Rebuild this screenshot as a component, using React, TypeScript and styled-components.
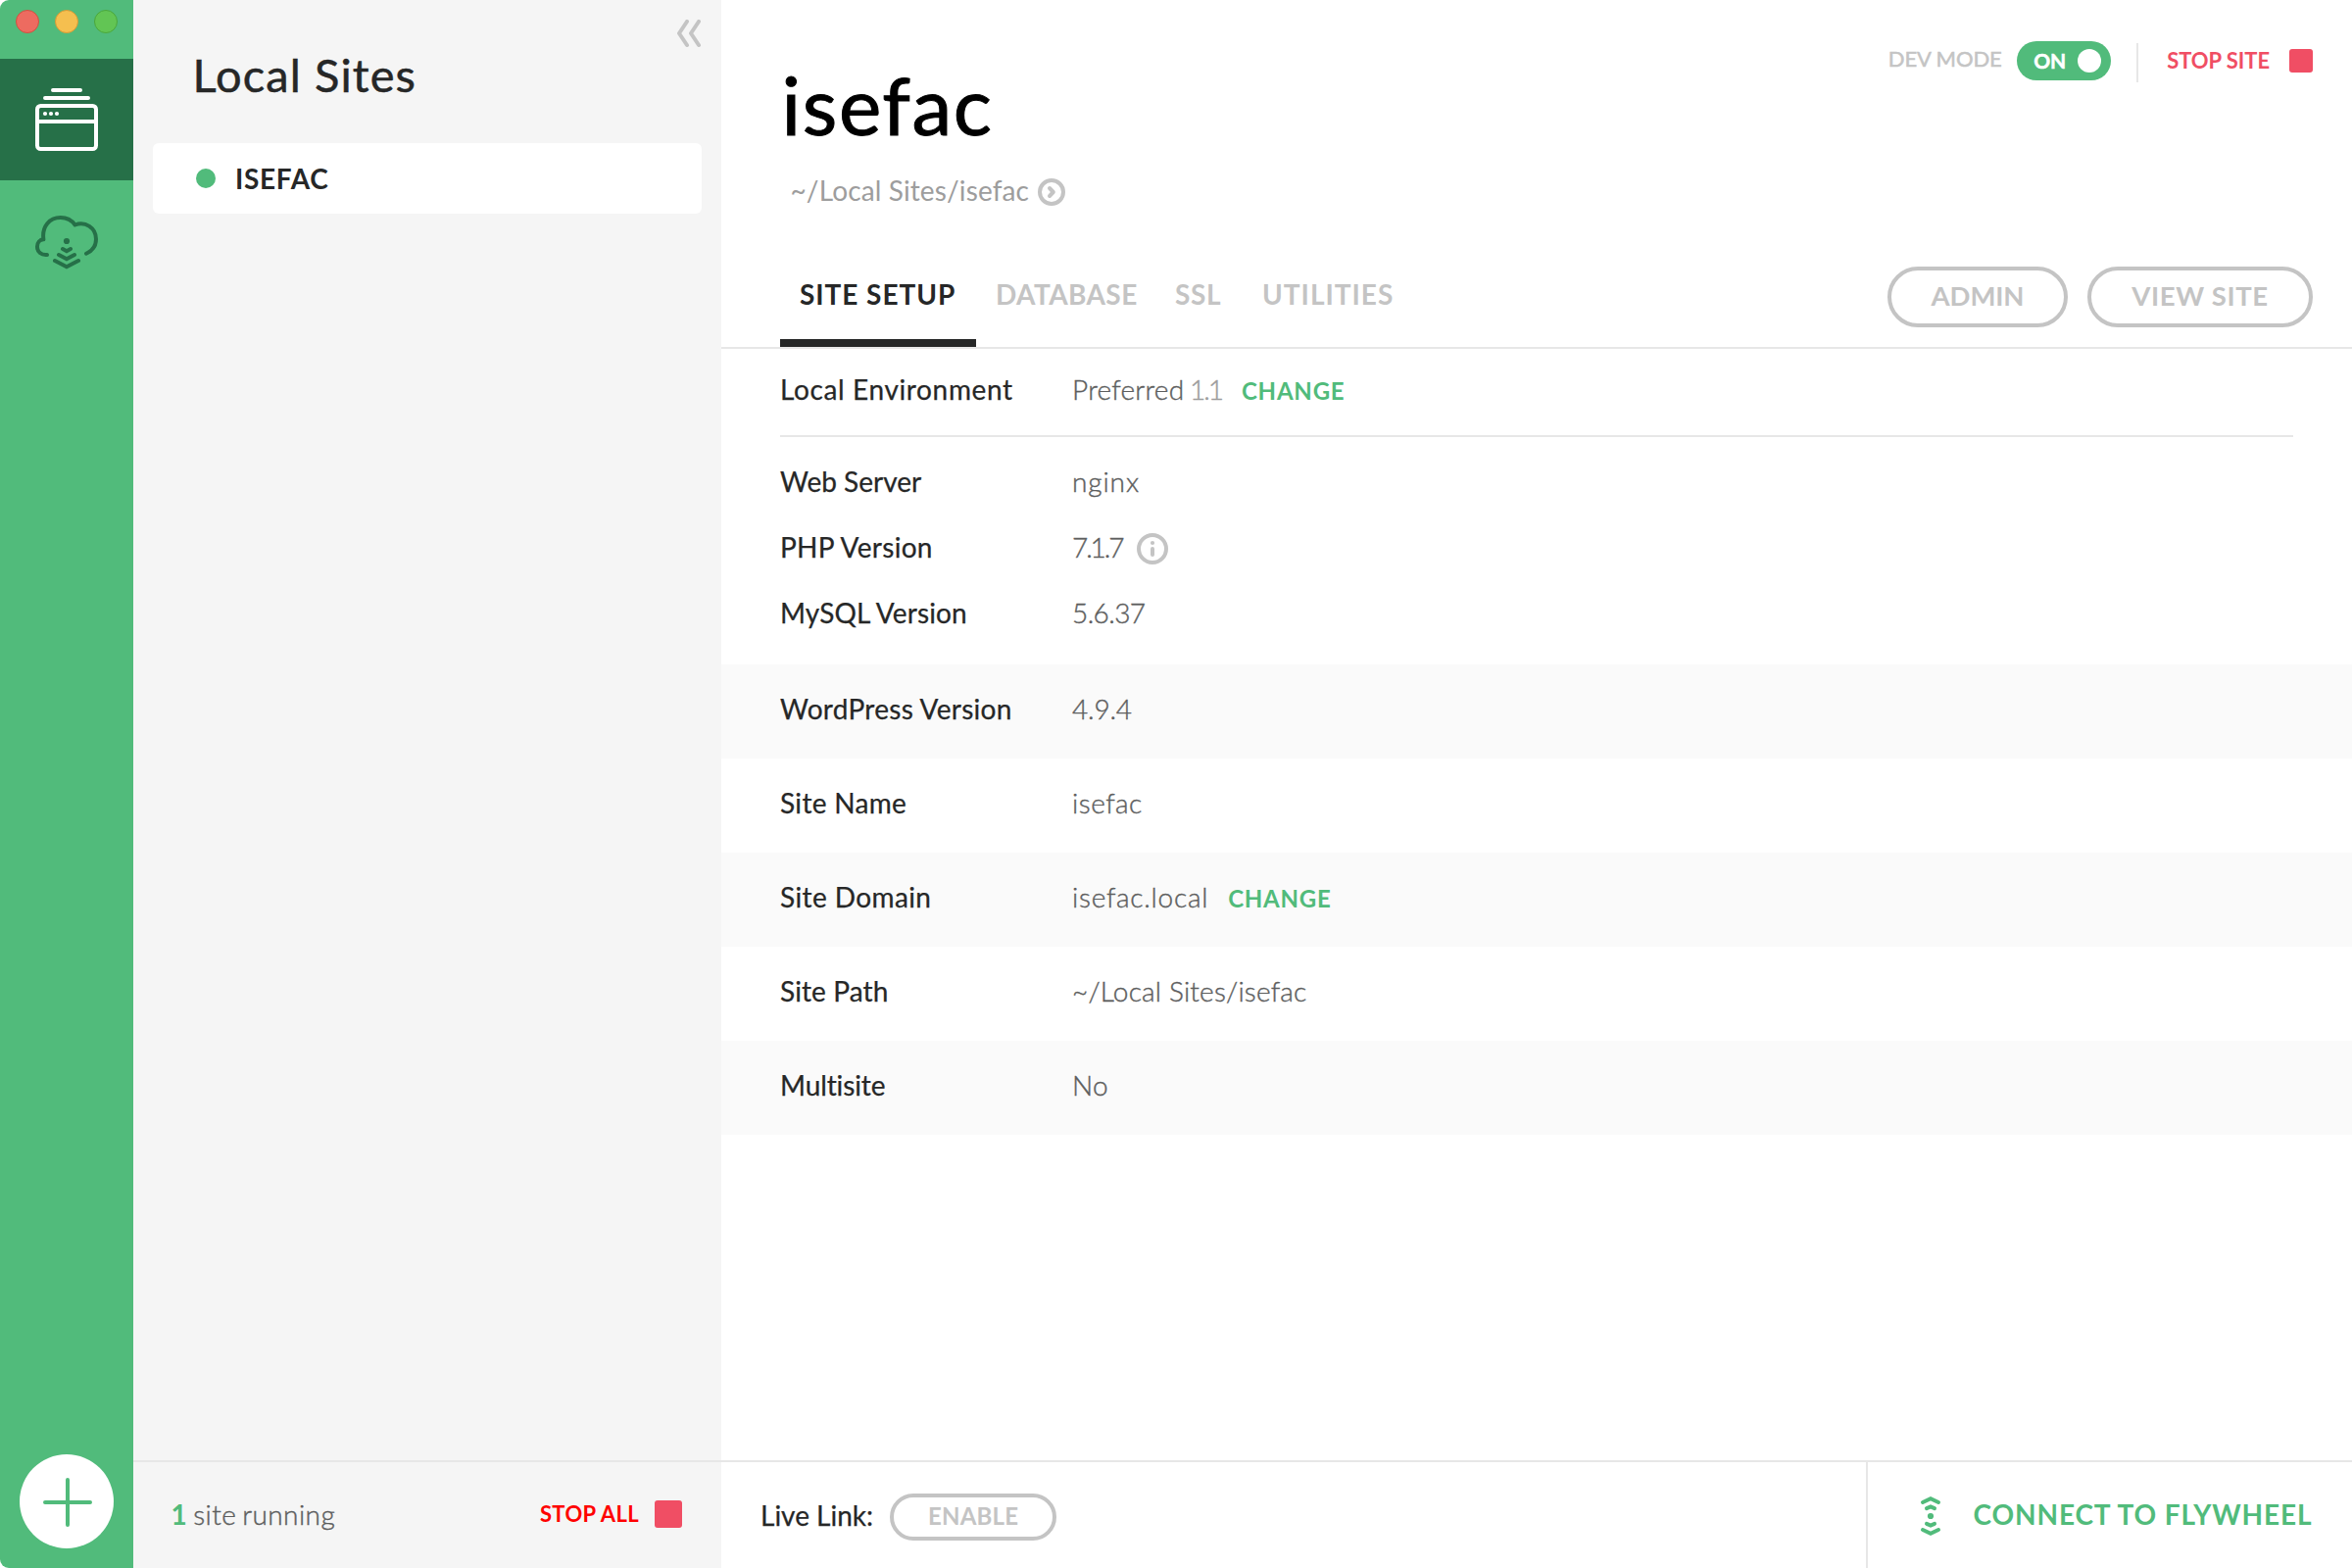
import React from 'react';
import styled, { createGlobalStyle } from 'styled-components';

const green = '#51bb7b';
const darkGreen = '#267048';
const red = '#f04e64';
const ink = '#262727';
const muted = '#c4c4c4';
const line = '#e7e7e7';

const GlobalStyle = createGlobalStyle`
  * { box-sizing: border-box; }
  body {
    margin: 0;
    background: #fff;
    color: ${ink};
    font-family: Lato, "Liberation Sans", sans-serif;
    font-size: 28px;
    line-height: 40px;
    white-space: nowrap;
  }
  button {
    margin: 0;
    padding: 0;
    border: 0;
    background: none;
    font: inherit;
    color: inherit;
    text-align: left;
  }
  h1, h2, p, dl, dt, dd { margin: 0; font-weight: 400; }
  svg { display: block; flex: none; }
`;

interface Track {
  $track?: number;
}

const Shell = styled.div`
  display: grid;
  grid-template-columns: 136px 600px 1fr;
  width: 2400px;
  height: 1600px;
  overflow: hidden;
  border-radius: 9px;
`;

/* Left rail */
const Rail = styled.nav`
  display: flex;
  flex-direction: column;
  align-items: center;
  background: ${green};
`;

const WindowControls = styled.div`
  display: flex;
  gap: 16px;
  height: 60px;
  padding-top: 10px;
`;

const Light = styled.span<{ $fill: string; $edge: string }>`
  width: 24px;
  height: 24px;
  border-radius: 50%;
  border: 1px solid ${(p) => p.$edge};
  background: ${(p) => p.$fill};
`;

const RailItem = styled.button<{ $active?: boolean }>`
  display: block;
  width: 136px;
  height: 124px;
  background: ${(p) => (p.$active ? darkGreen : 'transparent')};
`;

const AddButton = styled.button`
  display: block;
  width: 96px;
  height: 96px;
  margin: auto 0 20px;
  border-radius: 50%;
  background: #fff;
`;

/* Site list */
const Sidebar = styled.aside`
  display: flex;
  flex-direction: column;
  background: #f5f5f5;
`;

const SidebarHeader = styled.header`
  display: flex;
  justify-content: space-between;
  height: 146px;
  padding: 20px 20px 0 60.5px;
`;

const SidebarTitle = styled.h2`
  padding-top: 26px;
  font-size: 47px;
  line-height: 60px;
  letter-spacing: 1.1px;
  -webkit-text-stroke: 0.5px currentColor;
`;

const SiteItem = styled.button`
  display: flex;
  align-items: center;
  gap: 20px;
  height: 72px;
  margin: 0 20px;
  padding-left: 44px;
  border-radius: 6px;
  background: #fff;
  font-weight: 700;
  letter-spacing: 0.7px;
`;

const StatusDot = styled.span`
  width: 20px;
  height: 20px;
  border-radius: 50%;
  background: ${green};
`;

const SidebarFooter = styled.footer`
  display: flex;
  align-items: center;
  justify-content: space-between;
  height: 110px;
  margin-top: auto;
  padding: 0 40px 2px 38.5px;
  border-top: 2px solid ${line};
`;

const Running = styled.p`
  color: #5d5e5e;
  font-weight: 300;
  letter-spacing: 0.42px;
  word-spacing: -2px;
  -webkit-text-stroke: 0.4px currentColor;

  b {
    color: ${green};
    font-weight: 700;
    -webkit-text-stroke: 0;
  }
`;

const StopButton = styled.button<Track & { $color: string; $gap: number }>`
  display: flex;
  align-items: center;
  gap: ${(p) => p.$gap}px;
  color: ${(p) => p.$color};
  font-size: 22px;
  font-weight: 700;
  letter-spacing: ${(p) => p.$track ?? 0}px;
`;

const StopSquare = styled.span<{ $size: number }>`
  width: ${(p) => p.$size}px;
  height: ${(p) => p.$size}px;
  border-radius: 3px;
  background: ${red};
`;

/* Main pane */
const Main = styled.main`
  display: flex;
  flex-direction: column;
  background: #fff;
`;

const SiteHeader = styled.header`
  display: flex;
  justify-content: space-between;
  height: 272px;
  padding: 40px 40px 0 61.5px;
`;

const SiteTitle = styled.h1`
  padding-top: 16px;
  color: #000;
  font-size: 82px;
  line-height: 100px;
  letter-spacing: 1.6px;
  -webkit-text-stroke: 1px currentColor;
`;

const PathLink = styled.button`
  display: flex;
  align-items: center;
  gap: 9px;
  margin: 18px 0 0 9px;
  color: #9d9d9d;
  letter-spacing: 0.13px;

  svg { margin-top: 3px; }
`;

const HeaderActions = styled.div`
  display: flex;
  align-items: flex-start;
`;

const DevMode = styled.div`
  display: flex;
  align-items: center;
  gap: 15px;
  height: 40px;
  margin-top: 2px;
  color: ${muted};
  font-size: 22px;
  letter-spacing: -0.1px;
  -webkit-text-stroke: 0.5px currentColor;
`;

const DevLabel = styled.span`
  padding-bottom: 4px;
`;

const Toggle = styled.button`
  display: flex;
  align-items: center;
  justify-content: space-between;
  width: 96px;
  height: 40px;
  padding: 0 10px 0 17.5px;
  border-radius: 20px;
  background: ${green};
  color: #fff;
  font-size: 21px;
  font-weight: 700;
`;

const Knob = styled.span`
  width: 24px;
  height: 24px;
  border-radius: 50%;
  background: #fff;
`;

const Divider = styled.span`
  width: 2px;
  height: 40px;
  margin: 4px 29.5px 0 26px;
  background: ${line};
`;

const StopSlot = styled.div`
  padding-top: 2px;
`;

const TabBar = styled.div`
  display: flex;
  justify-content: space-between;
  height: 84px;
  padding: 0 40px 0 60px;
  border-bottom: 2px solid ${line};
`;

const Tabs = styled.div`
  display: flex;
`;

const Tab = styled.button<Track & { $active?: boolean; $width: number }>`
  display: block;
  width: ${(p) => p.$width}px;
  height: 82px;
  padding: 6px 0 24px 20px;
  border-bottom: 8px solid ${(p) => (p.$active ? ink : 'transparent')};
  color: ${(p) => (p.$active ? ink : muted)};
  font-weight: 700;
  letter-spacing: ${(p) => p.$track ?? 0}px;
`;

const TabActions = styled.div`
  display: flex;
  gap: 20px;
`;

const Pill = styled.button<Track & { $width: number; $height: number; $size: number }>`
  width: ${(p) => p.$width}px;
  height: ${(p) => p.$height}px;
  padding-bottom: 2px;
  border: 4px solid ${muted};
  border-radius: ${(p) => p.$height / 2}px;
  color: ${muted};
  font-size: ${(p) => p.$size}px;
  line-height: ${(p) => p.$height - 10}px;
  font-weight: 700;
  text-align: center;
  letter-spacing: ${(p) => p.$track ?? 0}px;
`;

const Settings = styled.dl`
  display: flex;
  flex-direction: column;
`;

const Environment = styled.div`
  margin: 0 60px;
  height: 90px;
  padding-top: 21px;
  border-bottom: 2px solid ${line};
`;

const Services = styled.div`
  display: flex;
  flex-direction: column;
  gap: 27px;
  height: 232px;
  padding: 25px 60px 0;
`;

const Setting = styled.div`
  display: flex;
  height: 40px;
`;

const Stripe = styled.div<{ $shaded: boolean }>`
  height: 96px;
  padding: 25px 60px 0;
  background: ${(p) => (p.$shaded ? '#fafafa' : '#fff')};
`;

const Label = styled.dt<Track>`
  width: 298px;
  letter-spacing: ${(p) => p.$track ?? 0}px;
  -webkit-text-stroke: 0.25px currentColor;
`;

const Value = styled.dd<Track>`
  color: #5d5e5e;
  font-weight: 300;
  letter-spacing: ${(p) => p.$track ?? 0}px;
  -webkit-text-stroke: 0.4px currentColor;
`;

const Revision = styled.span`
  margin-left: 5.5px;
  color: #9d9d9d;
  letter-spacing: -2px;
`;

const ChangeLink = styled.button`
  margin-left: 20px;
  padding-top: 2px;
  height: 40px;
  color: ${green};
  font-size: 24px;
  font-weight: 700;
  letter-spacing: 0.8px;
`;

const InfoSlot = styled.dd`
  padding: 6px 0 0 15px;
`;

const MainFooter = styled.footer`
  display: flex;
  justify-content: space-between;
  height: 110px;
  margin-top: auto;
  border-top: 2px solid ${line};
`;

const LiveLink = styled.div`
  display: flex;
  align-items: center;
  gap: 17px;
  padding: 4px 0 0 40px;
`;

const LiveLabel = styled.span`
  padding-bottom: 5px;
  -webkit-text-stroke: 0.25px currentColor;
`;

const Connect = styled.button`
  display: flex;
  align-items: center;
  gap: 31.5px;
  width: 496px;
  padding: 0 0 2px 52px;
  border-left: 2px solid ${line};
  color: ${green};
  font-weight: 700;
  letter-spacing: 0.88px;

  svg { margin-top: 4px; }
`;

const SitesIcon = () => (
  <svg width="136" height="124" viewBox="0 60 136 124" fill="none" stroke="#fff" strokeWidth="4">
    <path d="M54 92h28M46 100h44" strokeLinecap="round" />
    <rect x="38" y="108" width="60" height="44" rx="3.5" />
    <path d="M38 124h60" />
    <g fill="#fff" stroke="none">
      <circle cx="46" cy="116" r="2.1" />
      <circle cx="52" cy="116" r="2.1" />
      <circle cx="58" cy="116" r="2.1" />
    </g>
  </svg>
);

const CloudIcon = () => (
  <svg width="136" height="124" viewBox="0 184 136 124" fill="none" stroke={darkGreen} strokeWidth="4" strokeLinecap="round" strokeLinejoin="round">
    <path d="M48 260c-6 .6-10-3-10-8.300 0-4 2.600-7.200 6.400-7.400C42.500 231 50.500 222 61.800 222c6.200 0 11.600 3 14.800 7.500C87 225.500 98 232.500 98 244c0 6.500-4 12-10 14.700" />
    <path d="M64 254l4 2.200 4-2.200M60 260l8 4.300 8-4.300M56 266l12 6.300 12-6.300" strokeLinejoin="miter" />
    <circle cx="68" cy="246" r="3.100" fill={darkGreen} stroke="none" />
  </svg>
);

const PlusIcon = () => (
  <svg width="96" height="96" viewBox="20 1484 96 96" fill="none" stroke={green} strokeWidth="4" strokeLinecap="round">
    <path d="M69 1510v46M46 1533h46" />
  </svg>
);

const CollapseIcon = () => (
  <svg width="26" height="30" viewBox="690 20 26 30" fill="none" stroke={muted} strokeWidth="4" strokeLinecap="round" strokeLinejoin="round">
    <path d="M701 22l-8 12 8 12M713 22l-8 12 8 12" />
  </svg>
);

const GoIcon = () => (
  <svg width="28" height="28" viewBox="0 0 28 28" fill="none" stroke={muted} strokeWidth="4" strokeLinecap="round" strokeLinejoin="round">
    <circle cx="14" cy="14" r="12" />
    <path d="M12 10l3.800 4-3.800 4" />
  </svg>
);

const InfoIcon = () => (
  <svg width="32" height="32" viewBox="0 0 32 32" fill="none" stroke={muted} strokeWidth="4">
    <circle cx="16" cy="16" r="14" />
    <circle cx="16" cy="10" r="2.100" fill={muted} stroke="none" />
    <path d="M16 16v6" strokeLinecap="round" />
  </svg>
);

const FlywheelIcon = () => (
  <svg width="24" height="44" viewBox="1958 1526 24 44" fill="none" stroke={green} strokeWidth="4" strokeLinecap="round">
    <path d="M1962 1534l8-3.700 8 3.700M1966 1540.200l4-1.700 4 1.700M1966 1555.800l4 1.700 4-1.700M1962 1562l8 3.700 8-3.700" />
    <circle cx="1970" cy="1548" r="3.100" fill={green} stroke="none" />
  </svg>
);

const tabs = [
  { name: 'SITE SETUP', width: 200, track: 0.95 },
  { name: 'DATABASE', width: 183, track: 0.4 },
  { name: 'SSL', width: 89, track: 0.7 },
  { name: 'UTILITIES', width: 174, track: 1 },
];

const services = [
  { label: 'Web Server', track: 0, value: 'nginx', valueTrack: 0.9 },
  { label: 'PHP Version', track: 0.3, value: '7.1.7', valueTrack: -2.1, info: true },
  { label: 'MySQL Version', track: 0.1, value: '5.6.37', valueTrack: -0.6 },
];

const details = [
  { label: 'WordPress Version', track: 0.28, value: '4.9.4', valueTrack: -0.2 },
  { label: 'Site Name', track: 0.3, value: 'isefac', valueTrack: 0.5 },
  { label: 'Site Domain', track: 0.4, value: 'isefac.local', valueTrack: 0.75, change: true },
  { label: 'Site Path', track: 0.1, value: '~/Local Sites/isefac', valueTrack: 0.2 },
  { label: 'Multisite', track: -0.1, value: 'No', valueTrack: 0.4 },
];

export default function App() {
  return (
    <>
      <GlobalStyle />
      <Shell>
        <Rail>
          <WindowControls>
            <Light $fill="#ed6b60" $edge="#d1503f" />
            <Light $fill="#f5bf4f" $edge="#d69a35" />
            <Light $fill="#62c554" $edge="#4aa73c" />
          </WindowControls>
          <RailItem $active aria-label="Local sites"><SitesIcon /></RailItem>
          <RailItem aria-label="Cloud"><CloudIcon /></RailItem>
          <AddButton aria-label="Add site"><PlusIcon /></AddButton>
        </Rail>

        <Sidebar>
          <SidebarHeader>
            <SidebarTitle>Local Sites</SidebarTitle>
            <CollapseIcon />
          </SidebarHeader>
          <SiteItem><StatusDot />ISEFAC</SiteItem>
          <SidebarFooter>
            <Running><b>1</b> site running</Running>
            <StopButton $color="#ff0000" $gap={16} $track={0.35}>STOP ALL<StopSquare $size={28} /></StopButton>
          </SidebarFooter>
        </Sidebar>

        <Main>
          <SiteHeader>
            <div>
              <SiteTitle>isefac</SiteTitle>
              <PathLink>~/Local Sites/isefac<GoIcon /></PathLink>
            </div>
            <HeaderActions>
              <DevMode>
                <DevLabel>DEV MODE</DevLabel>
                <Toggle>ON<Knob /></Toggle>
              </DevMode>
              <Divider />
              <StopSlot>
                <StopButton $color={red} $gap={20} $track={-0.05}>STOP SITE<StopSquare $size={24} /></StopButton>
              </StopSlot>
            </HeaderActions>
          </SiteHeader>

          <TabBar>
            <Tabs>
              {tabs.map((tab, i) => (
                <Tab key={tab.name} $active={i === 0} $width={tab.width} $track={tab.track}>{tab.name}</Tab>
              ))}
            </Tabs>
            <TabActions>
              <Pill $width={184} $height={62} $size={27.5} $track={-0.1}>ADMIN</Pill>
              <Pill $width={230} $height={62} $size={27.5} $track={0.6}>VIEW SITE</Pill>
            </TabActions>
          </TabBar>

          <Settings>
            <Environment>
              <Setting>
                <Label $track={0.63}>Local Environment</Label>
                <Value $track={0.25}>Preferred<Revision>1.1</Revision></Value>
                <ChangeLink>CHANGE</ChangeLink>
              </Setting>
            </Environment>
            <Services>
              {services.map((s) => (
                <Setting key={s.label}>
                  <Label $track={s.track}>{s.label}</Label>
                  <Value $track={s.valueTrack}>{s.value}</Value>
                  {s.info && <InfoSlot><InfoIcon /></InfoSlot>}
                </Setting>
              ))}
            </Services>
            {details.map((d, i) => (
              <Stripe key={d.label} $shaded={i % 2 === 0}>
                <Setting>
                  <Label $track={d.track}>{d.label}</Label>
                  <Value $track={d.valueTrack}>{d.value}</Value>
                  {d.change && <ChangeLink>CHANGE</ChangeLink>}
                </Setting>
              </Stripe>
            ))}
          </Settings>

          <MainFooter>
            <LiveLink>
              <LiveLabel>Live Link:</LiveLabel>
              <Pill $width={170} $height={48} $size={24} $track={0.2}>ENABLE</Pill>
            </LiveLink>
            <Connect><FlywheelIcon />CONNECT TO FLYWHEEL</Connect>
          </MainFooter>
        </Main>
      </Shell>
    </>
  );
}
